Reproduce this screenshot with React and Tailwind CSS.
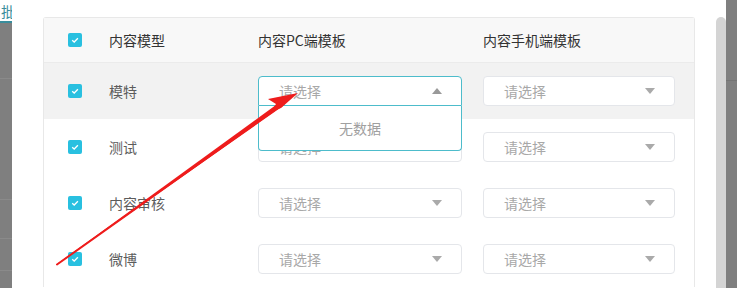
const rows = [
  { name: '模特', open: true },
  { name: '测试' },
  { name: '内容审核' },
  { name: '微博' },
];

function Check() {
  return (
    <span className="w-[14px] h-[14px] rounded-[2px] bg-[#29c0e0] flex items-center justify-center shrink-0">
      <svg width="10" height="10" viewBox="0 0 10 10">
        <path d="M2.2 5.2 L4.2 7 L7.9 3.2" fill="none" stroke="#fff" strokeWidth="1.3" />
      </svg>
    </span>
  );
}

function Caret({ up }) {
  return (
    <svg width="10" height="6" viewBox="0 0 10 6" className="shrink-0">
      {up ? <path d="M0 6 L5 0 L10 6 Z" fill="#999" /> : <path d="M0 0 L10 0 L5 6 Z" fill="#aaa" />}
    </svg>
  );
}

function Select({ w, open }) {
  return (
    <div className={`relative ${w}`}>
      <div className={`h-[30px] bg-white border flex items-center pl-[20px] pr-[19px] justify-between ${open ? 'border-[#4dbccb] rounded-t-[4px]' : 'border-[#e4e6ea] rounded-[4px]'}`}>
        <span className="text-[14px] text-[#a8a8a8]">请选择</span>
        <Caret up={open} />
      </div>
      {open && (
        <div className="absolute left-0 right-0 top-[30px] h-[45px] bg-white border border-t-0 border-[#4dbccb] rounded-b-[4px] z-10 flex items-center justify-center text-[14px] text-[#a0a0a0]">
          无数据
        </div>
      )}
    </div>
  );
}

export default function App() {
  return (
    <div className="w-[737px] h-[288px] flex overflow-hidden relative" style={{ fontFamily: '"Noto Sans CJK SC", "Microsoft YaHei", sans-serif' }}>
      {/* dimmed page, left */}
      <div className="w-[12px] bg-[#7f7f7f] flex flex-col shrink-0">
        <div className="h-[23px] bg-white border-b-[2px] border-[#3a8d9c] overflow-hidden text-[14px] leading-[22px] text-[#3a8d9c] pl-[1px] whitespace-nowrap">批</div>
        <div className="h-[55px]" />
        <div className="h-px bg-[#8a8a8a]" />
        <div className="h-[120px]" />
        <div className="h-px bg-[#8a8a8a]" />
        <div className="h-[38px]" />
        <div className="h-px bg-[#8a8a8a]" />
        <div className="h-[31px]" />
        <div className="h-px bg-[#8a8a8a]" />
      </div>

      {/* modal */}
      <div className="flex-1 bg-white flex pl-[31px] pt-[17px]">
        <div className="w-[652px] border-l border-r border-t border-[#e8e8e8] rounded-t-[3px] self-start">
          <div className="h-[45px] bg-[#f8f8f8] border-b border-[#ebebeb] grid grid-cols-[214px_225px_1fr] items-center text-[14px] text-[#333]">
            <div className="flex items-center pl-[24px] gap-[27px]">
              <Check />
              <span>内容模型</span>
            </div>
            <span>内容PC端模板</span>
            <span>内容手机端模板</span>
          </div>
          {rows.map((r) => (
            <div key={r.name} className={`h-[56px] grid grid-cols-[214px_225px_1fr] items-center text-[14px] text-[#5c5c5c] ${r.open ? 'bg-[#f2f2f2]' : ''}`}>
              <div className="flex items-center pl-[24px] gap-[27px]">
                <Check />
                <span>{r.name}</span>
              </div>
              <Select w="w-[204px]" open={r.open} />
              <Select w="w-[192px]" />
            </div>
          ))}
        </div>
        <div className="ml-auto w-[10px] bg-[#d4d4d4] rounded-t-[5px]" />
      </div>

      {/* dimmed page, right */}
      <div className="w-[11px] bg-[#7f7f7f] flex flex-col shrink-0">
        <div className="h-[80px]" />
        <div className="h-px bg-[#747474]" />
      </div>

      {/* annotation arrow */}
      <svg className="absolute left-0 top-0 pointer-events-none z-20" width="737" height="288">
        <polygon points="56,265 283,106 280,102 57,264" fill="#ee1c1c" />
        <polygon points="298,93 268,99 276,104 271,112 281,108" fill="#ee1c1c" />
        <line x1="57" y1="264.5" x2="284" y2="103.5" stroke="#ee1c1c" strokeWidth="2" strokeLinecap="round" />
      </svg>
    </div>
  );
}
